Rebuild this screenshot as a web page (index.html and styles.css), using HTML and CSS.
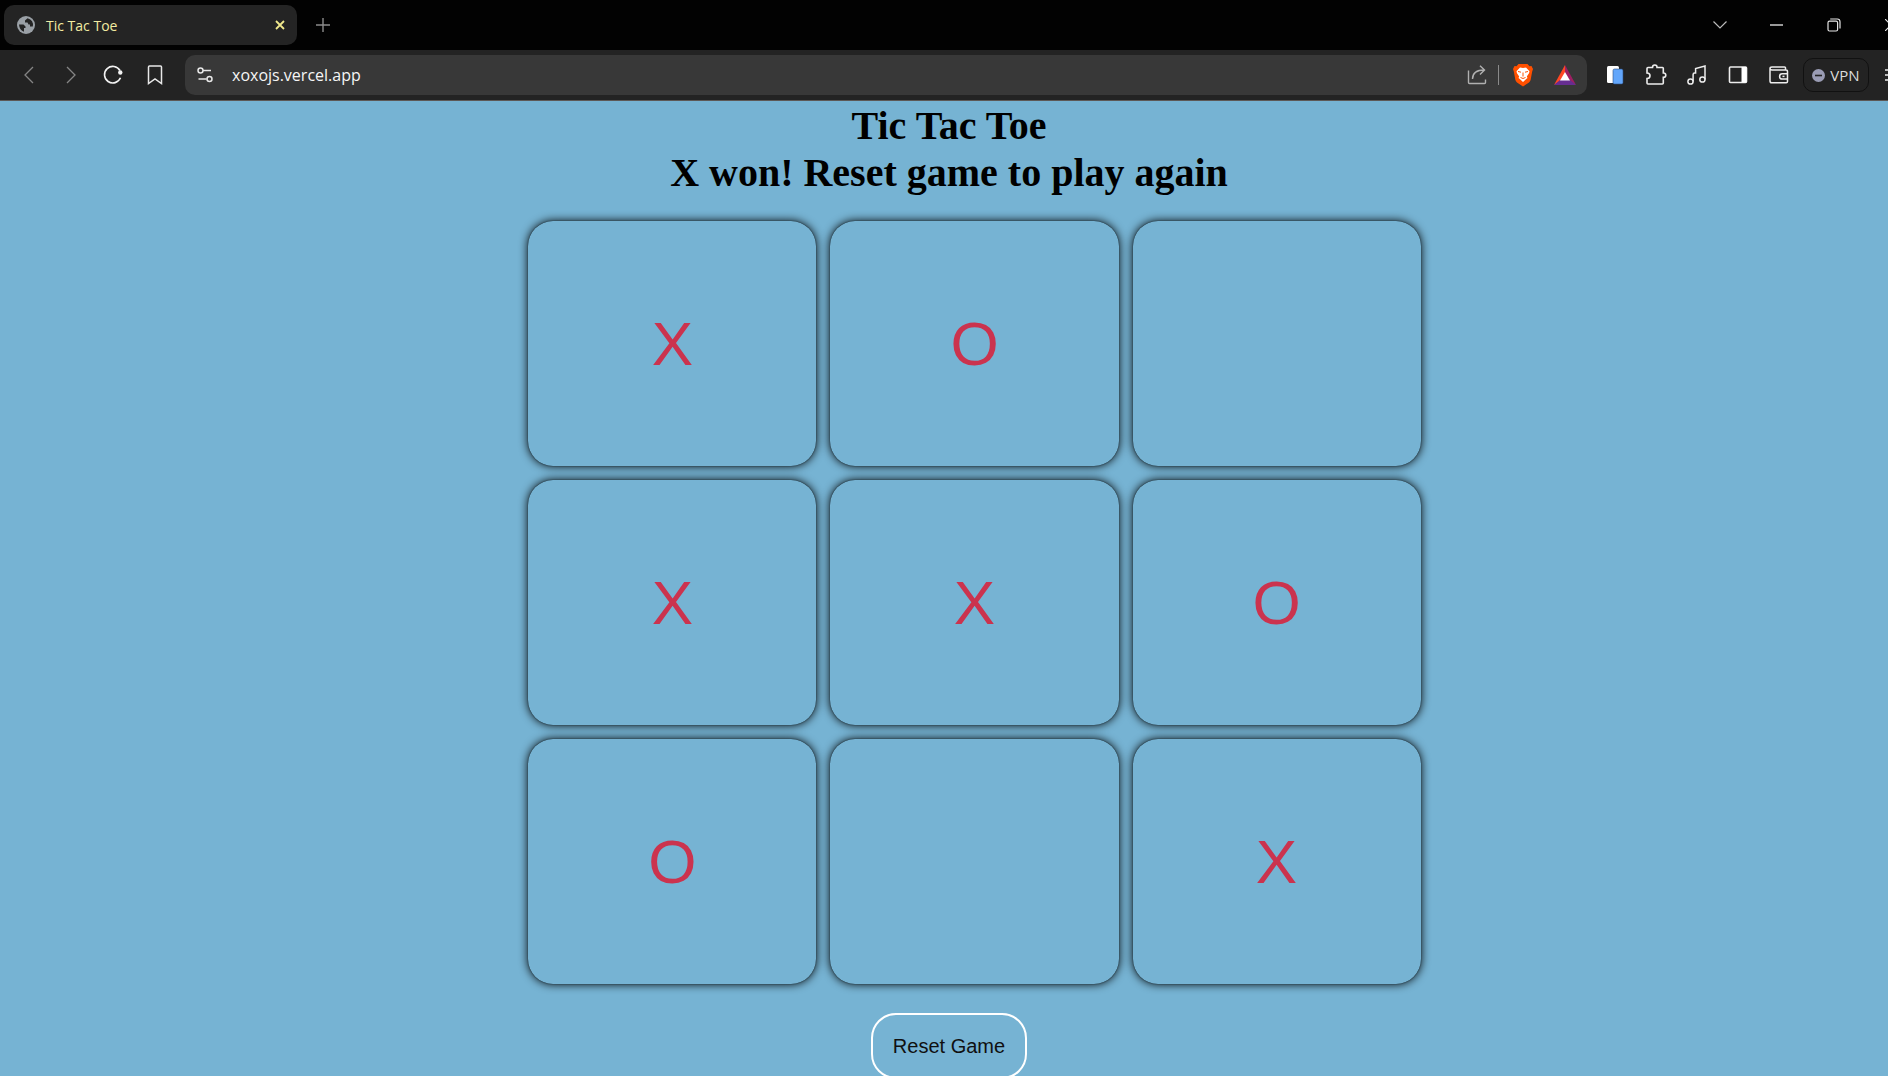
FILE: index.html
```html
<!DOCTYPE html>
<html lang="en">
<head>
<meta charset="utf-8">
<title>Tic Tac Toe</title>
<link rel="stylesheet" href="styles.css">
</head>
<body>
<div class="window">
  <header class="tabs">
    <div class="tab">
      <svg class="globe" width="18" height="18" viewBox="0 0 18 18"><circle cx="9" cy="9" r="9" fill="#9aa0a6"/><path d="M2 8.500h4.500l2 2v1.500H7v3.800Q2.500 14.500 2 8.500zM10.500 2.200L8 4.500v2h2.500l1 2h1.500v2h2.800Q17 4 10.500 2.200z" fill="#242424"/></svg>
      <span class="tab-title">Tic Tac Toe</span>
      <button class="tab-close" aria-label="Close tab"><svg width="12" height="12" viewBox="0 0 12 12"><path d="M2 2l8 8M10 2l-8 8" stroke="#f0e88c" stroke-width="1.8"/></svg></button>
    </div>
    <button class="new-tab" aria-label="New tab"><svg width="14" height="14" viewBox="0 0 14 14"><path d="M7 0v14M0 7h14" stroke="#8c8c8c" stroke-width="1.4"/></svg></button>
    <div class="controls">
      <button aria-label="Search tabs"><svg width="14" height="8" viewBox="0 0 14 8"><path d="M.5 .5L7 7l6.500-6.500" fill="none" stroke="#bbb" stroke-width="1.2"/></svg></button>
      <button aria-label="Minimize"><svg width="13" height="2" viewBox="0 0 13 2"><path d="M0 1h13" stroke="#fff" stroke-width="1.2"/></svg></button>
      <button aria-label="Restore"><svg width="14" height="14" viewBox="0 0 14 14" fill="none" stroke="#e6e6e6" stroke-width="1.2"><rect x="1" y="3.200" width="9.600" height="9.800" rx="1.500"/><path d="M3.200 1h7q2.800 0 2.800 2.800v6.700"/></svg></button>
      <button aria-label="Close"><svg width="12" height="12" viewBox="0 0 12 12"><path d="M0 0l12 12M12 0L0 12" stroke="#e6e6e6" stroke-width="1.200"/></svg></button>
    </div>
  </header>

  <nav class="toolbar">
    <div class="nav-buttons">
      <button aria-label="Back"><svg width="20" height="20" viewBox="0 0 20 20"><path d="M14 2L6 10l8 8" fill="none" stroke="#858585" stroke-width="1.300"/></svg></button>
      <button aria-label="Forward"><svg width="20" height="20" viewBox="0 0 20 20"><path d="M6 2l8 8-8 8" fill="none" stroke="#858585" stroke-width="1.300"/></svg></button>
      <button aria-label="Reload"><svg width="20" height="20" viewBox="0 0 20 20"><path d="M17.500 12.800A8.300 8.300 0 1 1 17 5.500" fill="none" stroke="#f2f2f2" stroke-width="1.600"/><circle cx="17.300" cy="7.500" r="2.200" fill="#f2f2f2"/></svg></button>
      <button aria-label="Bookmark"><svg width="20" height="20" viewBox="0 0 20 20"><path d="M4.500 1h11q1 0 1 1v16.500L10 14l-6.500 4.500V2q0-1 1-1z" fill="none" stroke="#e8e8e8" stroke-width="1.500"/></svg></button>
    </div>
    <div class="address">
      <svg width="16" height="16" viewBox="0 0 16 16" fill="none" stroke="#e8e8e8" stroke-width="1.500"><circle cx="3.500" cy="3.500" r="2.500"/><path d="M6 3.500h8M1.500 12h8"/><circle cx="12.500" cy="12" r="2.500"/></svg>
      <input class="url" type="text" aria-label="Address" value="xoxojs.vercel.app">
      <button class="share" aria-label="Share"><svg width="20" height="20" viewBox="0 0 20 20" fill="none" stroke="#b0b0b0" stroke-width="1.400"><path d="M1.500 5.500v12q0 1 1 1h15q1 0 1-1v-3M5.500 14c0-6 4-9 12-9M13 .8L17.500 5 13 9.500"/></svg></button>
      <span class="divider"></span>
      <button class="shield" aria-label="Brave Shields"><svg width="20" height="24" viewBox="0 0 20 24"><path d="M5.500 1h9L16.500 3.200l2-.2L20 6l-.8 2.500L17.600 17q-.4 1.500-1.600 2.400L10 23.500l-6-4.100Q2.800 18.500 2.400 17L.8 8.500 0 6l1.500-3 2 .2z" fill="#ff5000"/><path d="M7 4.500l3 .6 3-.6 3.500 3.800-.5 2-2.200 3.200.7 1.500-1.300 1-3.200 3-3.200-3-1.300-1 .7-1.500L4 10.300l-.5-2z" fill="#fff"/><path d="M5 8.500l3 .7M15 8.500l-3 .7M10 9.500v4M7.500 14.500l2.500 1 2.500-1" fill="none" stroke="#ff5000" stroke-width="1"/></svg></button>
      <button class="rewards" aria-label="Brave Rewards"><svg width="22" height="20" viewBox="0 0 22 20"><path d="M11 0L0 20l11-7z" fill="#ff4724"/><path d="M11 0l11 20-11-7z" fill="#9e1f63"/><path d="M0 20h22l-6-5H6z" fill="#662d91"/><path d="M11 7l5 8.500H6z" fill="#fff"/></svg></button>
    </div>
    <div class="extensions">
      <button aria-label="Copy extension"><svg width="20" height="20" viewBox="0 0 20 20"><rect x="2" y="1" width="12" height="17" rx="1.500" fill="#fff"/><rect x="8" y="4" width="10" height="15" rx="1.500" fill="#62a6fb" stroke="#2d4d80" stroke-width=".6"/></svg></button>
      <button aria-label="Extensions"><svg width="22" height="22" viewBox="0 0 22 22"><path d="M2 4.500q0-1 1-1h4.500q0-2.500 2.300-2.500T12 3.500h5.500q.8 0 .8.800V9q2.500 0 2.500 2.200t-2.500 2.200V19q0 1-1 1H3q-1 0-1-1v-4.500c4 0 4-5.500 0-5.500z" fill="none" stroke="#ededed" stroke-width="1.600"/></svg></button>
      <button aria-label="Media"><svg width="22" height="22" viewBox="0 0 22 22" fill="none" stroke="#ededed" stroke-width="1.500"><circle cx="4.500" cy="17.500" r="2.600"/><circle cx="16.400" cy="15.500" r="2.600"/><path d="M7.100 17.500v-7q0-1.500 1.500-1.500h1V4.500L19 2v13.500"/></svg></button>
      <button aria-label="Sidebar"><svg width="20" height="20" viewBox="0 0 20 20"><rect x="1.500" y="2" width="17" height="15.500" rx="1" fill="none" stroke="#ededed" stroke-width="1.600"/><path d="M13.500 2h5v15.500h-5z" fill="#fff"/></svg></button>
      <button aria-label="Wallet"><svg width="20" height="20" viewBox="0 0 20 20" fill="none" stroke="#ededed" stroke-width="1.500"><path d="M16.500 5V2.800Q16.500 2 15.500 2H3Q1 2 1 3.500V16q0 1.800 1.800 1.800h14.400q1.300 0 1.300-1.300V6.500Q18.500 5 17 5H3Q1 5 1 3.500M19 8.800h-5.800a2.600 2.600 0 0 0 0 5.200H19"/><path d="M13.500 11.400h2"/></svg></button>
    </div>
    <button class="vpn"><svg width="13" height="13" viewBox="0 0 13 13"><circle cx="6.500" cy="6.500" r="6.500" fill="#9a9cb4"/><path d="M3 6.500h7" stroke="#242424" stroke-width="1.600"/></svg>VPN</button>
    <button class="menu" aria-label="Menu"><svg width="16" height="14" viewBox="0 0 16 14"><path d="M0 2h16M0 7h16M0 12h16" stroke="#ededed" stroke-width="1.500"/></svg></button>
  </nav>

  <main class="game">
    <h1>Tic Tac Toe</h1>
    <h1>X won! Reset game to play again</h1>
    <div class="board">
      <button class="cell">X</button>
      <button class="cell">O</button>
      <button class="cell" aria-label="Empty"></button>
      <button class="cell">X</button>
      <button class="cell">X</button>
      <button class="cell">O</button>
      <button class="cell">O</button>
      <button class="cell" aria-label="Empty"></button>
      <button class="cell">X</button>
    </div>
    <button class="reset">Reset Game</button>
  </main>
</div>
</body>
</html>
```
FILE: styles.css
```css
* { box-sizing: border-box; }

html { background: #76b3d3; }

body {
  margin: 0;
  overflow: hidden;
}

button {
  margin: 0;
  padding: 0;
  border: 0;
  background: none;
  font: inherit;
  color: inherit;
}

svg {
  display: block;
  flex: none;
}

.window {
  width: calc(100% + 32px);
  font-family: "Open Sans", "Noto Sans", sans-serif;
}

/* Tab strip */
.tabs {
  display: flex;
  align-items: center;
  height: 50px;
  padding-left: 4px;
  background: #020202;
}

.tab {
  display: flex;
  align-items: center;
  width: 293px;
  height: 40px;
  padding: 0 11px 0 13px;
  border-radius: 10px;
  background: #242424;
}

.tab-title {
  flex: 1;
  margin-left: 11px;
  font-size: 14px;
  color: #f2eca2;
}

.new-tab { margin-left: 19px; }

.controls {
  display: flex;
  margin-left: auto;
  margin-right: 1px;
}

.controls button {
  display: grid;
  place-items: center;
  width: 57px;
  height: 40px;
}

/* Toolbar */
.toolbar {
  display: flex;
  align-items: center;
  height: 51px;
  padding-left: 8px;
  background: #232323;
  border-bottom: 1px solid #5c5856;
}

.nav-buttons,
.extensions { display: flex; }

.nav-buttons button,
.extensions button {
  display: grid;
  place-items: center;
  width: 42px;
  height: 40px;
}

.extensions { margin-left: 7px; }

.extensions button { width: 41px; }

.address {
  display: flex;
  flex: 1;
  align-items: center;
  height: 40px;
  margin-left: 9px;
  padding: 0 11px 0 12px;
  border-radius: 10px;
  background: #383838;
}

.url {
  flex: 1;
  min-width: 0;
  margin-left: 19px;
  padding: 0;
  border: 0;
  outline: 0;
  background: none;
  font: 16px "Open Sans", "Noto Sans", sans-serif;
  color: #f5f5f5;
}

.divider {
  width: 1px;
  height: 20px;
  margin: 0 14px 0 11px;
  background: #8a8a8a;
}

.rewards { margin-left: 21px; }

.vpn {
  display: flex;
  align-items: center;
  justify-content: center;
  gap: 5px;
  width: 66px;
  height: 34px;
  margin-left: 4px;
  border: 1px solid #111;
  border-radius: 10px;
  font-size: 15px;
  color: #dcdcdc;
}

.menu { margin: 0 19px 0 16px; }

/* Game */
.game {
  padding: 1px 22px 0 0;
  background: #76b3d3;
  text-align: center;
}

.game h1 {
  margin: 0;
  font: bold 40px/47px "Liberation Serif", "Times New Roman", serif;
  color: #000;
}

.board {
  display: grid;
  grid-template-columns: repeat(3, 1fr);
  gap: 14px;
  margin: 25px calc(26% - 16px) 29px calc(26% + 35px);
}

.cell {
  aspect-ratio: 288 / 245;
  border-radius: 25px;
  background: #76b3d3;
  box-shadow: 0 0 1px #000, 0 0 10px #000;
  font: 62px "Liberation Sans", Arial, sans-serif;
  color: #cb334e;
}

.reset {
  padding: 20px;
  border: 2px solid #fff;
  border-radius: 25px;
  font: 20px/22px "Liberation Sans", Arial, sans-serif;
  color: #101010;
}
```
